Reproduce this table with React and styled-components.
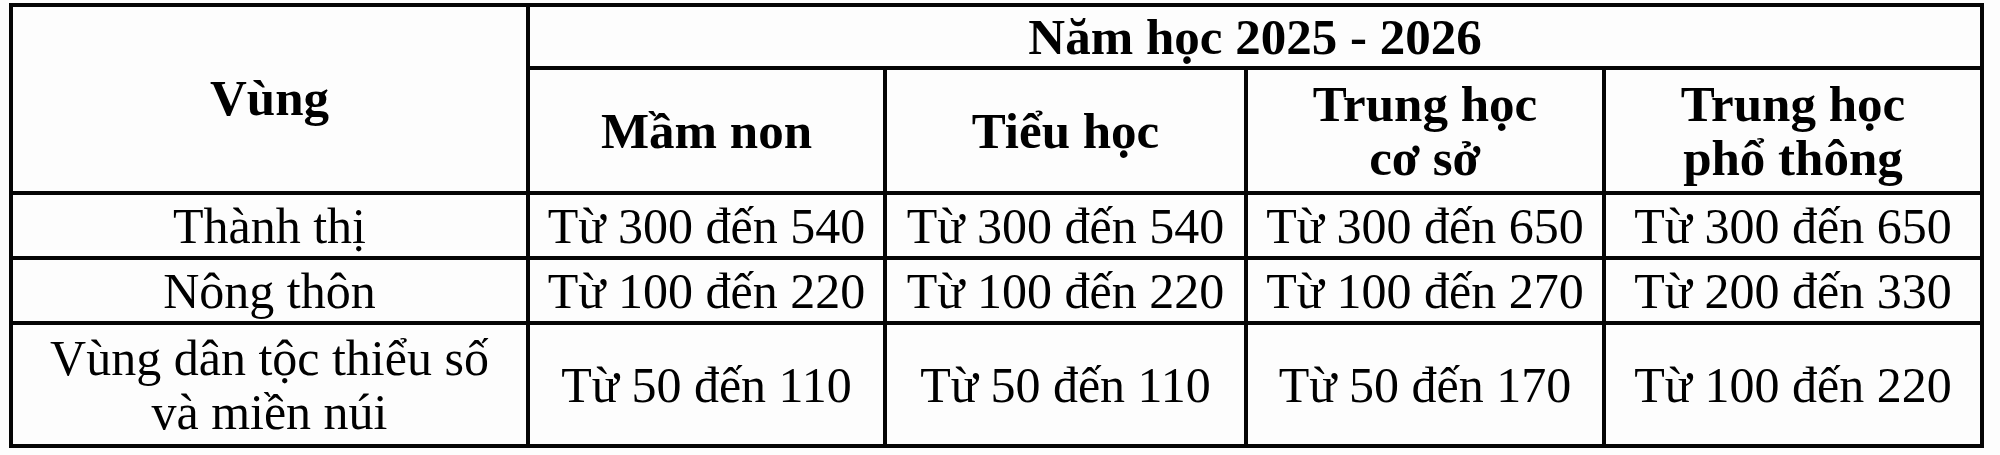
import React from "react";
import styled, { createGlobalStyle } from "styled-components";

const GlobalStyle = createGlobalStyle`
  html, body {
    margin: 0;
    padding: 0;
    background: #ffffff;
  }
  body {
    font-family: "Liberation Serif", "Times New Roman", serif;
    color: #000000;
  }
`;

const Page = styled.div`
  width: 2000px;
  height: 455px;
  padding: 3px 0 0 9px;
  box-sizing: border-box;
  background: #fdfdfd;
`;

const Table = styled.div`
  display: inline-grid;
  grid-template-columns: 513px 353px 357px 354px 374px;
  grid-template-rows: 59px 121px 61px 61px 119px;
  gap: 4px;
  padding: 4px;
  background: #050505;
`;

const Cell = styled.div`
  background: #fdfdfd;
  display: flex;
  align-items: center;
  justify-content: center;
  text-align: center;
  font-family: "Liberation Serif", "Times New Roman", serif;
  font-size: ${(p) => (p.$head ? "51px" : "50px")};
  font-weight: ${(p) => (p.$head ? 700 : 400)};
  line-height: 54px;
  color: #000000;
  white-space: nowrap;
  grid-row: ${(p) => (p.$rowSpan ? `span ${p.$rowSpan}` : "auto")};
  grid-column: ${(p) => (p.$colSpan ? `span ${p.$colSpan}` : "auto")};
  padding-bottom: ${(p) => (p.$lift ? `${p.$lift}px` : "0")};
`;

const levels = [
  ["Mầm non"],
  ["Tiểu học"],
  ["Trung học", "cơ sở"],
  ["Trung học", "phổ thông"],
];

const rows = [
  {
    region: ["Thành thị"],
    values: ["Từ 300 đến 540", "Từ 300 đến 540", "Từ 300 đến 650", "Từ 300 đến 650"],
  },
  {
    region: ["Nông thôn"],
    values: ["Từ 100 đến 220", "Từ 100 đến 220", "Từ 100 đến 270", "Từ 200 đến 330"],
  },
  {
    region: ["Vùng dân tộc thiểu số", "và miền núi"],
    values: ["Từ 50 đến 110", "Từ 50 đến 110", "Từ 50 đến 170", "Từ 100 đến 220"],
  },
];

const Lines = ({ parts }) => (
  <div>
    {parts.map((p, i) => (
      <div key={i}>{p}</div>
    ))}
  </div>
);

export default function App() {
  return (
    <Page>
      <GlobalStyle />
      <Table>
        <Cell $head $rowSpan={2} $lift={2}>
          Vùng
        </Cell>
        <Cell $head $colSpan={4}>
          Năm học 2025 - 2026
        </Cell>
        {levels.map((l, i) => (
          <Cell $head key={i}>
            <Lines parts={l} />
          </Cell>
        ))}
        {rows.map((r, i) => (
          <React.Fragment key={i}>
            <Cell>
              <Lines parts={r.region} />
            </Cell>
            {r.values.map((v, j) => (
              <Cell key={j}>{v}</Cell>
            ))}
          </React.Fragment>
        ))}
      </Table>
    </Page>
  );
}
